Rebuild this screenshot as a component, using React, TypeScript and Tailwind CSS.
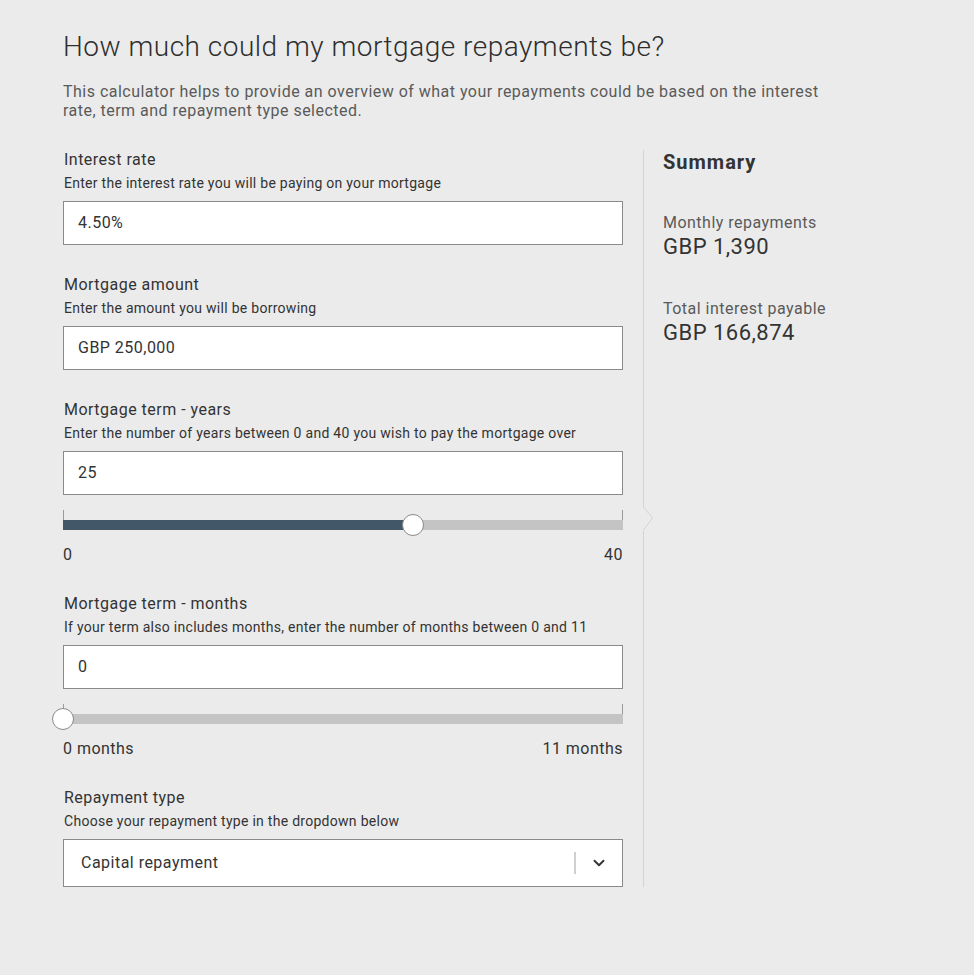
import { ChevronDown } from 'lucide-react'

type FieldProps = {
  label: string
  hint: string
  value: string
}

function Field({ label, hint, value }: FieldProps) {
  return (
    <div>
      <div className="pl-px text-[16px] leading-5 text-[#333]">{label}</div>
      <div className="mt-[3px] pl-px text-[14px] leading-5 tracking-[0.02em] text-[#333]">{hint}</div>
      <div className="mt-[8px] flex h-11 items-center border border-[#8a8a8a] bg-white px-[14px] text-[16px] text-[#333]">
        {value}
      </div>
    </div>
  )
}

function Slider({ pct, min, max }: { pct: number; min: string; max: string }) {
  return (
    <div className="mt-[15px]">
      <div className="relative h-5">
        <span className="absolute left-0 top-0 h-5 w-px bg-[#9a9a9a]" />
        <span className="absolute right-0 top-0 h-5 w-px bg-[#9a9a9a]" />
        <div className="absolute bottom-0 left-0 right-0 h-[10px] bg-[#c4c4c4]">
          <div className="h-full bg-[#425868]" style={{ width: `${pct}%` }} />
        </div>
        <span
          className="absolute top-[4px] h-[22px] w-[22px] -translate-x-1/2 rounded-full border border-[#8a8a8a] bg-white"
          style={{ left: `${pct}%` }}
        />
      </div>
      <div className="mt-[15px] flex justify-between text-[16px] leading-5 text-[#333]">
        <span>{min}</span>
        <span>{max}</span>
      </div>
    </div>
  )
}

export default function App() {
  return (
    <div className="min-h-[975px] bg-[#ebebeb] pl-[63px] pt-[29px] font-['Roboto',sans-serif] tracking-[0.03em] text-[#333]">
      <h1 className="text-[28px] font-light leading-9 tracking-[0.5px] text-[#2e2e2e]">
        How much could my mortgage repayments be?
      </h1>
      <p className="mt-[17px] w-[760px] text-[16px] leading-[19px] text-[#5a5a5a]">
        This calculator helps to provide an overview of what your repayments could be based on the interest
        rate, term and repayment type selected.
      </p>

      <div className="mt-[30px] flex">
        <div className="w-[560px]">
          <Field label="Interest rate" hint="Enter the interest rate you will be paying on your mortgage" value="4.50%" />
          <div className="mt-[30px]">
            <Field label="Mortgage amount" hint="Enter the amount you will be borrowing" value="GBP 250,000" />
          </div>
          <div className="mt-[30px]">
            <Field
              label="Mortgage term - years"
              hint="Enter the number of years between 0 and 40 you wish to pay the mortgage over"
              value="25"
            />
            <Slider pct={62.5} min="0" max="40" />
          </div>
          <div className="mt-[29px]">
            <Field
              label="Mortgage term - months"
              hint="If your term also includes months, enter the number of months between 0 and 11"
              value="0"
            />
            <Slider pct={0} min="0 months" max="11 months" />
          </div>
          <div className="mt-[29px]">
            <div className="pl-px text-[16px] leading-5 text-[#333]">Repayment type</div>
            <div className="mt-[3px] pl-px text-[14px] leading-5 tracking-[0.02em] text-[#333]">
              Choose your repayment type in the dropdown below
            </div>
            <div className="mt-[8px] flex h-12 items-center border border-[#8a8a8a] bg-white pl-[17px] text-[16px] text-[#333]">
              <span className="flex-1">Capital repayment</span>
              <span className="h-[22px] w-[2px] bg-[#d0d0d0]" />
              <span className="flex w-[46px] justify-center">
                <ChevronDown className="h-[18px] w-[18px] text-[#333]" strokeWidth={2.5} />
              </span>
            </div>
          </div>
        </div>

        <div className="relative ml-5 flex-1 border-l border-[#d4d4d4] pl-[19px]">
          <svg className="absolute left-[-2px] top-[357px]" width="14" height="24" viewBox="0 0 14 24">
            <rect x="0" y="0" width="4" height="24" fill="#ebebeb" />
            <polyline points="1.5,0 10.5,11 1.5,23" fill="none" stroke="#d4d4d4" strokeWidth="1" />
          </svg>
          <h2 className="text-[20px] font-bold leading-6 tracking-[0.05em] text-[#333]">Summary</h2>
          <div className="mt-[39px] text-[16px] leading-5 text-[#5a5a5a]">Monthly repayments</div>
          <div className="text-[22px] leading-7 text-[#333]">GBP 1,390</div>
          <div className="mt-[38px] text-[16px] leading-5 text-[#5a5a5a]">Total interest payable</div>
          <div className="text-[22px] leading-7 text-[#333]">GBP 166,874</div>
        </div>
      </div>
    </div>
  )
}
